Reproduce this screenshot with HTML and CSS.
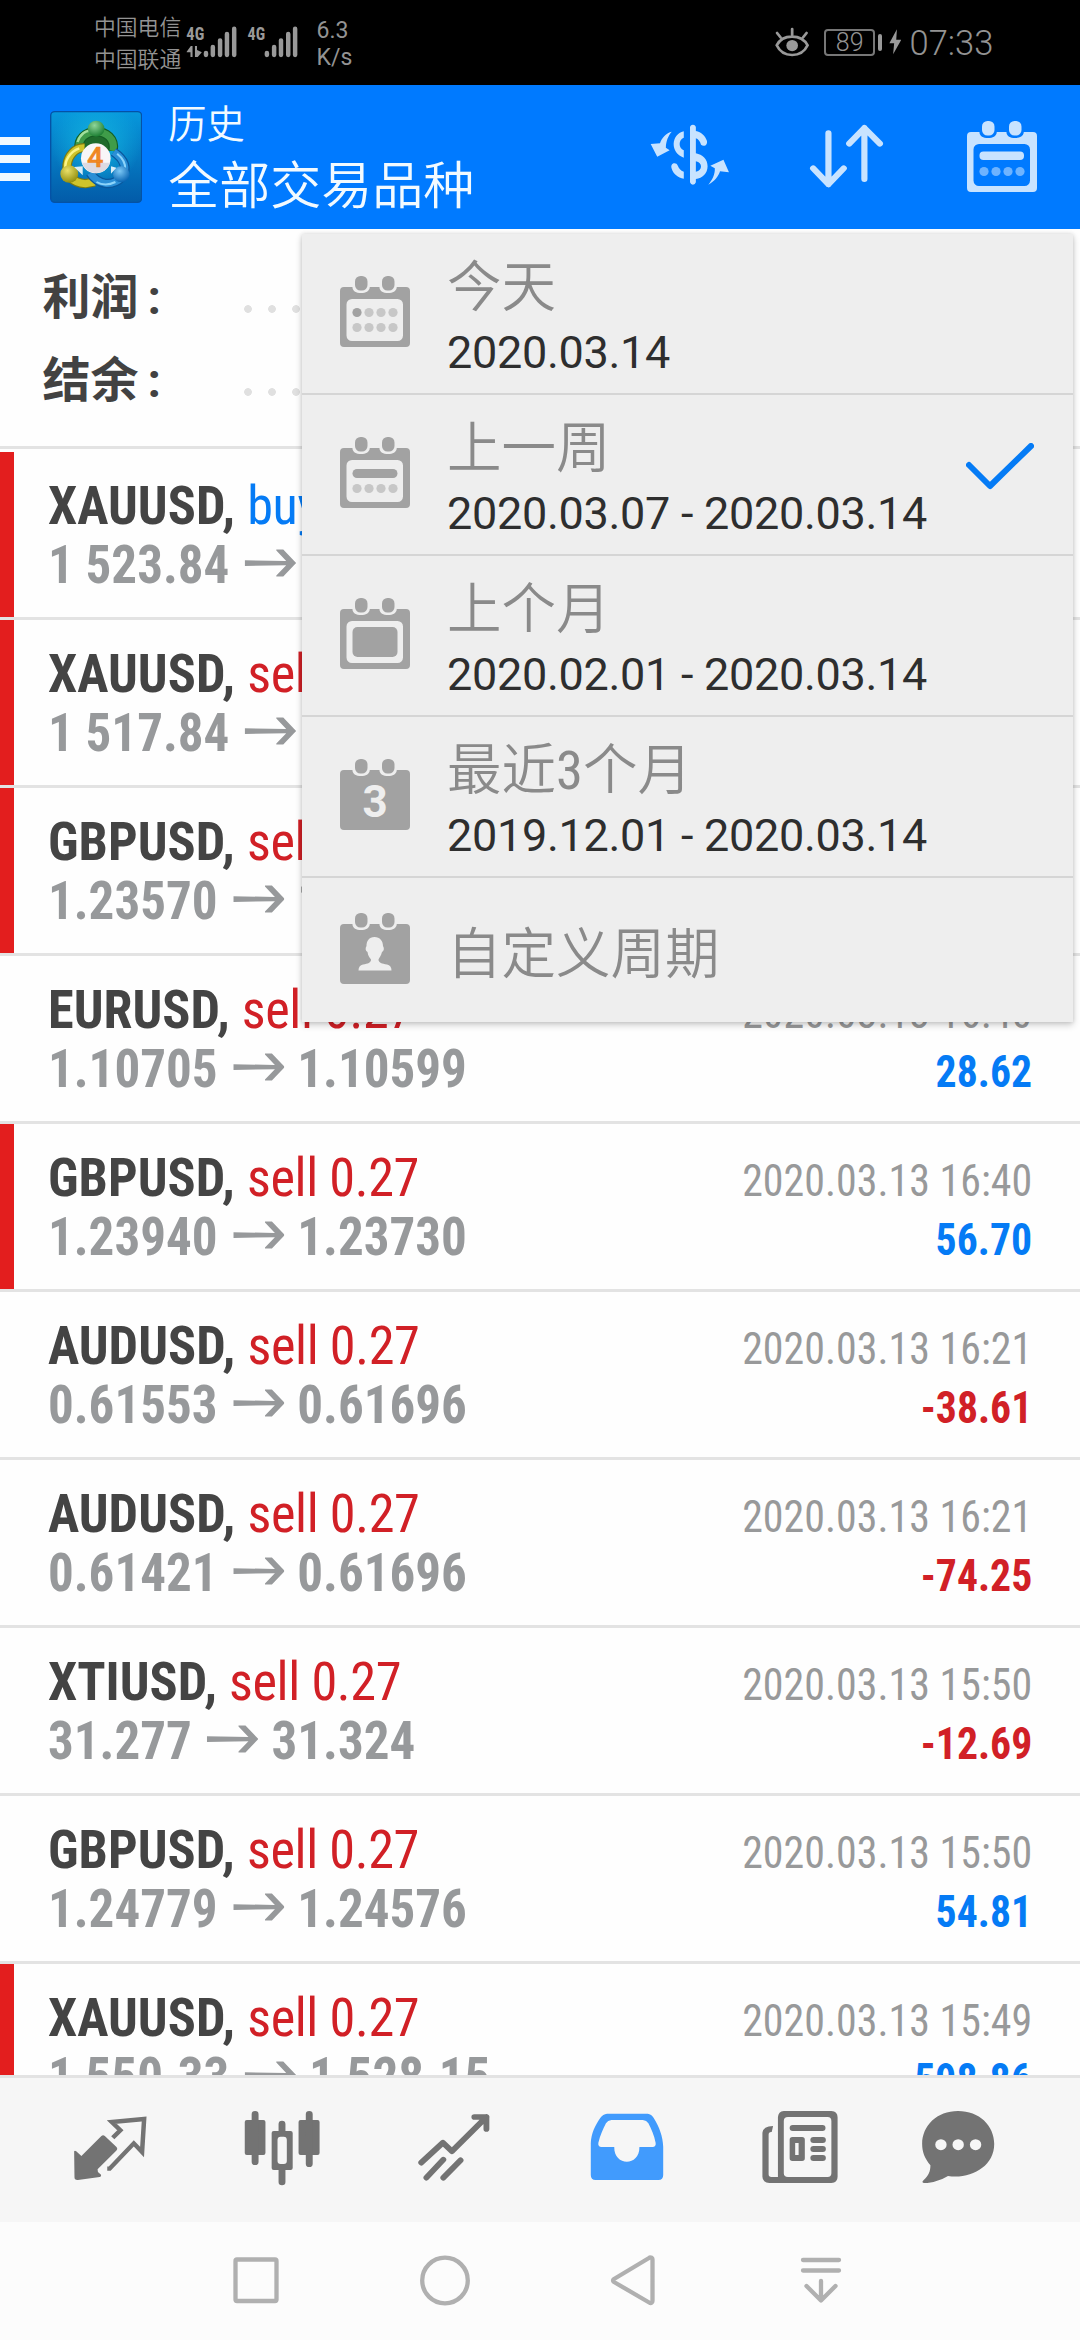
FILE: index.html
```html
<!DOCTYPE html>
<html lang="zh-CN">
<head>
<meta charset="utf-8">
<title>历史</title>
<link rel="stylesheet" href="styles.css">
</head>
<body>
<svg class="defs" aria-hidden="true">
  <defs>
    <symbol id="arrow" viewBox="0 0 52 28" preserveAspectRatio="none">
      <path d="M0 11.2L42 12 32 1.500V0.500H39L52 14 39 27.500H32V26.500L42 16.200 0 17Z"/>
    </symbol>
    <symbol id="cal-pins" viewBox="0 0 70 71">
      <rect x="15" y="0" width="12.500" height="14.500" rx="5.500"/><rect x="42" y="0" width="12.500" height="14.500" rx="5.500"/>
    </symbol>
    <path id="cal-top" d="M4 11H12.500V12C13 15 16 17 21 17S29 15 29.700 12V11H39.500V12C40 15 43 17 48 17S56 15 56.700 12V11H66A4 4 0 0 1 70 15V67A4 4 0 0 1 66 71H4A4 4 0 0 1 0 67V15A4 4 0 0 1 4 11Z"/>
    <path id="cal-frame" fill-rule="evenodd" d="M4 11H12.500V12C13 15 16 17 21 17S29 15 29.700 12V11H39.500V12C40 15 43 17 48 17S56 15 56.700 12V11H66A4 4 0 0 1 70 15V67A4 4 0 0 1 66 71H4A4 4 0 0 1 0 67V15A4 4 0 0 1 4 11ZM12 23A5.500 5.500 0 0 0 6.500 28.500V59.500A5.500 5.500 0 0 0 12 65H57.500A5.500 5.500 0 0 0 63 59.500V28.500A5.500 5.500 0 0 0 57.500 23Z"/>
    <linearGradient id="logo-bg" x1="0" y1="0" x2="0" y2="1"><stop offset="0" stop-color="#0798dc"/><stop offset="1" stop-color="#035ba8"/></linearGradient>
    <radialGradient id="logo-glow" cx=".5" cy=".35" r=".5"><stop offset="0" stop-color="#12b4e0"/><stop offset="1" stop-color="#12b4e0" stop-opacity="0"/></radialGradient>
    <radialGradient id="g-green" cx=".4" cy=".3" r=".7"><stop offset="0" stop-color="#8fd69a"/><stop offset="1" stop-color="#1d7f33"/></radialGradient>
    <radialGradient id="g-yellow" cx=".4" cy=".3" r=".7"><stop offset="0" stop-color="#e9e069"/><stop offset="1" stop-color="#94900f"/></radialGradient>
    <radialGradient id="g-blue" cx=".4" cy=".3" r=".7"><stop offset="0" stop-color="#7cc8f5"/><stop offset="1" stop-color="#0a66b4"/></radialGradient>
  </defs>
</svg>

<header class="status">
  <div class="carriers"><span>中国电信</span><span>中国联通</span></div>
  <svg class="signals" viewBox="540 75 330 100" preserveAspectRatio="none">
    <g class="net"><text x="541" y="121" textLength="52" lengthAdjust="spacingAndGlyphs">4G</text><text x="719" y="121" textLength="51" lengthAdjust="spacingAndGlyphs">4G</text></g>
    <path d="M542 155L554 138H559V171H553V157H542ZM566 138H572V150L586 157 574 171H566Z"/>
    <g class="bars"><path d="M598 159V165M618 141V165M639 121V165M659 102V165M680 86V165"/><path d="M775 159V165M796 141V165M816 121V165M837 102V165M857 86V165"/></g>
  </svg>
  <div class="speed"><span>6.3</span><span>K/s</span></div>
  <svg class="eye" viewBox="683 80 102 92" preserveAspectRatio="none">
    <path class="line" d="M688 135C705 100 760 100 778 135C760 174 706 174 688 135ZM733 86V104M689 98L699 111M775 98L765 111"/><circle cx="733" cy="136" r="17"/>
  </svg>
  <div class="battery"><span class="cell">89</span><i class="nub"></i></div>
  <svg class="bolt" viewBox="1012 88 36 78" preserveAspectRatio="none"><path d="M1035 89L1013 131H1027L1024 164 1048 120H1033Z"/></svg>
  <time class="clock">07:33</time>
</header>

<div class="appbar">
  <div class="burger"><i></i><i></i><i></i></div>
  <svg class="logo" viewBox="145 332 268 276" preserveAspectRatio="none">
    <rect x="147" y="334" width="264" height="272" rx="12" fill="url(#logo-bg)" stroke="#0552a5" stroke-width="4"/>
    <rect x="150" y="337" width="258" height="266" rx="10" fill="url(#logo-glow)"/>
    <path d="M232 452C222 372 332 372 326 452Z" fill="#1f6b2c"/>
    <path d="M230 452C216 375 342 375 328 452" fill="none" stroke="#145f24" stroke-width="28"/>
    <path d="M230 452C216 375 342 375 328 452" fill="none" stroke="#3f9c49" stroke-width="21"/>
    <path d="M225 425C236 392 258 388 275 392" fill="none" stroke="#a2e09c" stroke-width="7"/>
    <path d="M245 442C190 440 165 545 248 550L275 545" fill="none" stroke="#7b7a12" stroke-width="28"/>
    <path d="M245 442C190 440 165 545 248 550L275 545" fill="none" stroke="#cfc42b" stroke-width="21"/>
    <path d="M230 444C200 455 187 485 190 505" fill="none" stroke="#fbf487" stroke-width="7"/>
    <path d="M330 455C365 480 368 505 355 530C325 560 285 555 262 518" fill="none" stroke="#0a579c" stroke-width="28"/>
    <path d="M330 455C365 480 368 505 355 530C325 560 285 555 262 518" fill="none" stroke="#2b8fd6" stroke-width="21"/>
    <path d="M340 460C358 475 364 490 363 505M280 545Q305 560 335 545" fill="none" stroke="#8cd4fa" stroke-width="6"/>
    <circle cx="279" cy="385" r="24" fill="url(#g-green)"/><circle cx="201" cy="521" r="26" fill="url(#g-yellow)"/><circle cx="352" cy="522" r="24" fill="url(#g-blue)"/>
    <path d="M215 500L240 498V525ZM322 498L338 502 322 520Z" fill="#fff" opacity=".85"/>
    <ellipse cx="278" cy="474" rx="43" ry="45" fill="#f8f6f8"/>
    <path d="M238 487H320A43 45 0 0 1 238 487Z" fill="#dddae2"/>
    <text class="four" x="276" y="500" text-anchor="middle">4</text>
  </svg>
  <div class="titles"><span class="screen">历史</span><span class="scope">全部交易品种</span></div>
  <svg class="tool t-dollar" viewBox="320 370 232 190" preserveAspectRatio="none">
    <path d="M383 396C368 398 353 416 349 431L322 433 341 471 377 452 366 444C366 425 373 408 383 396ZM489 555C505 548 520 528 523 515L549 518 533 480 495 498 508 506C509 525 500 542 489 555Z"/>
    <path d="M418 395C380 404 378 460 418 474V452C402 446 402 420 418 414ZM391 491C383 491 380 499 383 507C388 523 401 534 418 537V516C408 513 404 506 401 499C399 493 395 491 391 491ZM436 383Q437 375 444.500 375T453 383V394C469 397 480 409 485 423C488 438 475 442 468 435C465 425 460 418 453 416V461C472 465 487 478 487 500C487 522 472 536 453 538V548Q451 555 444.500 555T436 548ZM453 485V516C473 514 473 488 453 485Z" fill-rule="evenodd"/>
  </svg>
  <svg class="tool t-sort" viewBox="780 370 218 198" preserveAspectRatio="none">
    <path class="thick" d="M836.500 401V554M792 506L836.500 554 881 506M941 538V385M897 432L941 385 986 432"/>
  </svg>
  <svg class="tool t-cal" viewBox="0 0 70 71"><use href="#cal-pins" width="70" height="71"/><use href="#cal-frame"/><rect x="12.500" y="30.500" width="44.500" height="8.500" rx="4"/><g opacity=".55"><circle cx="17" cy="50.500" r="4.600"/><circle cx="29" cy="50.500" r="4.600"/><circle cx="41" cy="50.500" r="4.600"/><circle cx="53" cy="50.500" r="4.600"/></g></svg>
</div>

<main class="history">
  <section class="summary">
    <div class="sum-row"><b>利润<span class="colon">:</span></b><i class="leader"></i></div>
    <div class="sum-row"><b>结余<span class="colon">:</span></b><i class="leader"></i></div>
  </section>

  <section class="deals">
    <article class="deal flagged"><div class="line"><span class="sym">XAUUSD, <em class="buy">buy</em></span></div><div class="line"><span class="px">1 523.84<svg><use href="#arrow"/></svg></span></div></article>
    <article class="deal flagged"><div class="line"><span class="sym">XAUUSD, <em>sell</em></span></div><div class="line"><span class="px">1 517.84<svg><use href="#arrow"/></svg></span></div></article>
    <article class="deal flagged"><div class="line"><span class="sym">GBPUSD, <em>sell</em></span></div><div class="line"><span class="px">1.23570<svg><use href="#arrow"/></svg>1.</span></div></article>
    <article class="deal"><div class="line"><span class="sym">EURUSD, <em>sell 0.27</em></span><time>2020.03.13 16:40</time></div><div class="line"><span class="px">1.10705<svg><use href="#arrow"/></svg>1.10599</span><span class="pl">28.62</span></div></article>
    <article class="deal flagged"><div class="line"><span class="sym">GBPUSD, <em>sell 0.27</em></span><time>2020.03.13 16:40</time></div><div class="line"><span class="px">1.23940<svg><use href="#arrow"/></svg>1.23730</span><span class="pl">56.70</span></div></article>
    <article class="deal"><div class="line"><span class="sym">AUDUSD, <em>sell 0.27</em></span><time>2020.03.13 16:21</time></div><div class="line"><span class="px">0.61553<svg><use href="#arrow"/></svg>0.61696</span><span class="pl loss">-38.61</span></div></article>
    <article class="deal"><div class="line"><span class="sym">AUDUSD, <em>sell 0.27</em></span><time>2020.03.13 16:21</time></div><div class="line"><span class="px">0.61421<svg><use href="#arrow"/></svg>0.61696</span><span class="pl loss">-74.25</span></div></article>
    <article class="deal"><div class="line"><span class="sym">XTIUSD, <em>sell 0.27</em></span><time>2020.03.13 15:50</time></div><div class="line"><span class="px">31.277<svg><use href="#arrow"/></svg>31.324</span><span class="pl loss">-12.69</span></div></article>
    <article class="deal"><div class="line"><span class="sym">GBPUSD, <em>sell 0.27</em></span><time>2020.03.13 15:50</time></div><div class="line"><span class="px">1.24779<svg><use href="#arrow"/></svg>1.24576</span><span class="pl">54.81</span></div></article>
    <article class="deal flagged"><div class="line"><span class="sym">XAUUSD, <em>sell 0.27</em></span><time>2020.03.13 15:49</time></div><div class="line"><span class="px">1 550.33<svg><use href="#arrow"/></svg>1 528.15</span><span class="pl">598.86</span></div></article>
  </section>
</main>

<div class="menu">
  <div class="item">
    <svg class="cal" viewBox="0 0 70 71"><use href="#cal-pins" width="70" height="71"/><use href="#cal-frame"/><circle cx="17" cy="36.500" r="4.600"/><g opacity=".5"><circle cx="29" cy="36.500" r="4.600"/><circle cx="41" cy="36.500" r="4.600"/><circle cx="53" cy="36.500" r="4.600"/><circle cx="17" cy="51.500" r="4.600"/><circle cx="29" cy="51.500" r="4.600"/><circle cx="41" cy="51.500" r="4.600"/><circle cx="53" cy="51.500" r="4.600"/></g></svg>
    <div class="label"><span class="name">今天</span><span class="range">2020.03.14</span></div>
  </div>
  <div class="item">
    <svg class="cal" viewBox="0 0 70 71"><use href="#cal-pins" width="70" height="71"/><use href="#cal-frame"/><rect x="12.500" y="32" width="45" height="9" rx="4.500"/><g opacity=".5"><circle cx="17" cy="51.500" r="4.600"/><circle cx="29" cy="51.500" r="4.600"/><circle cx="41" cy="51.500" r="4.600"/><circle cx="53" cy="51.500" r="4.600"/></g></svg>
    <div class="label"><span class="name">上一周</span><span class="range">2020.03.07 - 2020.03.14</span></div>
    <svg class="check" viewBox="0 0 68 48"><path d="M3 22L24 43 65 3"/></svg>
  </div>
  <div class="item">
    <svg class="cal" viewBox="0 0 70 71"><use href="#cal-pins" width="70" height="71"/><use href="#cal-frame"/><rect x="12.500" y="29" width="45" height="30" rx="5"/></svg>
    <div class="label"><span class="name">上个月</span><span class="range">2020.02.01 - 2020.03.14</span></div>
  </div>
  <div class="item">
    <svg class="cal" viewBox="0 0 70 71"><use href="#cal-pins" width="70" height="71"/><use href="#cal-top"/><text class="cal-num" x="35" y="57.500" text-anchor="middle">3</text></svg>
    <div class="label"><span class="name">最近<span class="num">3</span>个月</span><span class="range">2019.12.01 - 2020.03.14</span></div>
  </div>
  <div class="item short">
    <svg class="cal" viewBox="0 0 70 71"><use href="#cal-pins" width="70" height="71"/><use href="#cal-top"/><path class="cut" d="M34.500 24C40 24 43 28 43 33C44.500 35 44 38 42 39C41 43 39 45 38.500 46.500C38.500 50 42 50.500 47 51.500C50 52.500 51.500 54 51.500 57.500H18.500C18.500 54 20 52.500 23 51.500C28 50.500 31 50 31 46.500C30 45 28 43 27.500 39C25.500 38 25 35 26.500 33C26.500 28 29 24 34.500 24Z"/></svg>
    <div class="label"><span class="name">自定义周期</span></div>
  </div>
</div>

<nav class="tabs">
  <svg viewBox="203 474 232 240" preserveAspectRatio="none"><path d="M215 604Q217 600 221 604L236 618 294 558Q299 553 304 558L337 590Q343 596 337 602L283 658 284 666 293 674Q295 679 289 681L226 690Q216 691 216 682Z"/><path class="st" d="M311 656H318L388 580 412 606 418 507 324 516 349 541 327 563"/></svg>
  <svg viewBox="701 474 232 240" preserveAspectRatio="none"><rect x="709" y="510" width="60" height="105" rx="6"/><rect x="865" y="510" width="61" height="105" rx="6"/><path class="wick" d="M739 493V635M896 493V641M817 522V548M817 655V696"/><path fill-rule="evenodd" d="M793 543H842Q848 543 848 549V654Q848 660 842 660H793Q787 660 787 654V549Q787 543 793 543ZM813 560Q804 560 804 570V633Q804 642 813 642H822Q831 642 831 633V570Q831 560 822 560Z"/></svg>
  <svg viewBox="1201 474 232 240" preserveAspectRatio="none"><path class="st trend" d="M1222 638L1285 578 1311 604 1411 501M1376 501H1411V537M1286 629L1237 683M1336 631L1286 683"/></svg>
  <svg class="active" viewBox="135 474 232 240" preserveAspectRatio="none"><path fill-rule="evenodd" d="M193 491H311Q322 492 328 503C345 530 355 560 356 590V675Q356 690 342 690H160Q146 690 146 675V580C147 550 159 525 174 503Q181 492 193 491ZM206 510Q195 511 190 520C182 536 173 556 168 578Q166 590 177 591H214C213 650 288 650 287 591H325Q336 590 334 578C330 556 321 536 313 520Q308 511 297 510Z"/></svg>
  <svg viewBox="639 474 232 240" preserveAspectRatio="none"><path fill-rule="evenodd" d="M708 483H846Q864 484 864 502V680Q864 698 846 699H666Q647 698 646 680V548Q648 529 677 528L673 546Q664 545 664 554V673Q664 681 672 681H691V502Q692 484 708 483ZM720 501Q708 501 708 513V670Q708 681 720 681H835Q846 681 846 670V513Q846 501 835 501Z"/><rect x="725" y="525" width="104" height="18" rx="9"/><path fill-rule="evenodd" d="M733 561H761Q769 561 769 569V625Q769 633 761 633H733Q725 633 725 625V569Q725 561 733 561ZM741 579V615H751V579Z"/><rect x="785" y="561" width="45" height="18" rx="9"/><rect x="785" y="588" width="45" height="18" rx="9"/><rect x="785" y="615" width="45" height="18" rx="9"/></svg>
  <svg viewBox="1097 474 232 240" preserveAspectRatio="none"><path fill-rule="evenodd" d="M1213 483C1275 483 1318 527 1318 582C1318 650 1250 688 1184 678C1162 691 1140 699 1115 699Q1106 698 1113 691C1128 677 1133 665 1133 646C1116 625 1109 605 1109 582C1109 527 1152 483 1213 483Z"/><g class="dots"><circle cx="1163.500" cy="584" r="16.500"/><circle cx="1213.500" cy="584" r="16.500"/><circle cx="1264" cy="584" r="16.500"/></g></svg>
</nav>

<footer class="sysnav">
  <svg viewBox="0 0 60 60"><rect x="9.500" y="9.500" width="41" height="41.500" rx="1.500"/></svg>
  <svg viewBox="0 0 60 60"><circle cx="30" cy="30.500" r="22.800"/></svg>
  <svg viewBox="0 0 60 60"><path d="M47.500 7.500A2 2 0 0 1 49.500 9.500V51A2 2 0 0 1 47 53L11 32Q9 30.500 11 29L46 8A2 2 0 0 1 47.500 7.500Z"/></svg>
  <svg viewBox="0 0 60 60"><path d="M12 10H48M12 20.500H48M30 31V50M15.500 36L30 50.500 44.500 36"/></svg>
</footer>
</body>
</html>
```

FILE: styles.css
```css
* { box-sizing: border-box; }
html, body { margin: 0; }
body {
  position: relative;
  width: 1080px;
  height: 2340px;
  display: flex;
  flex-direction: column;
  overflow: hidden;
  background: #fefefe;
  font-family: Roboto, "Noto Sans CJK SC", sans-serif;
}
svg { display: block; }
.defs { position: absolute; width: 0; height: 0; }
i, em { font-style: normal; }

/* status bar */
.status {
  flex: none;
  height: 85px;
  display: flex;
  align-items: flex-start;
  background: #000;
  color: #939393;
  fill: #999;
}
.carriers {
  width: 92px;
  margin: 10px 0 0 94px;
  display: flex;
  flex-direction: column;
  font-family: "Noto Sans CJK SC", sans-serif;
  font-weight: 350;
  font-size: 21.800px;
  line-height: 32px;
  white-space: nowrap;
}
.signals { width: 113.600px; height: 33.300px; margin-top: 25px; }
.net text { font: 700 55px "Roboto Condensed", Roboto, sans-serif; font-stretch: 75%; }
.bars { stroke: #999; stroke-width: 13; stroke-linecap: round; }
.speed {
  width: 40px;
  margin: 17px 0 0 17px;
  display: flex;
  flex-direction: column;
  font-size: 23px;
  line-height: 27px;
}
.eye { width: 35px; height: 30.600px; margin: 26.700px 0 0 418.600px; }
.eye .line { fill: none; stroke: #999; stroke-width: 8; stroke-linecap: round; }
.battery { display: flex; align-items: center; margin: 29px 0 0 14px; gap: 2.500px; }
.cell {
  width: 51px;
  height: 27px;
  border: 2px solid #777;
  border-radius: 4px;
  font-weight: 300;
  font-size: 25px;
  line-height: 24px;
  text-align: center;
}
.nub { width: 4px; height: 17px; border-radius: 2px; background: #999; }
.bolt { width: 12.400px; height: 26px; margin: 29px 0 0 7px; }
.clock { margin: 23px 0 0 8.500px; font-weight: 300; font-size: 34.500px; line-height: 40px; }

/* application bar */
.appbar {
  flex: none;
  height: 144px;
  display: flex;
  align-items: flex-start;
  background: #007aff;
  color: #f2faff;
}
.burger { width: 30px; margin-top: 52px; display: flex; flex-direction: column; gap: 10px; }
.burger i { height: 8px; background: #f0f8ff; }
.logo { width: 92.300px; height: 92px; margin: 25.700px 0 0 20px; }
.four { font: 500 84px Roboto, sans-serif; fill: #f08a24; stroke: #ee7d1a; stroke-width: 1.500; }
.titles {
  width: 330px;
  margin: 9px 0 0 26px;
  display: flex;
  flex-direction: column;
  font-family: "Noto Sans CJK SC", sans-serif;
  font-weight: 350;
  white-space: nowrap;
}
.screen { font-size: 38.300px; line-height: 56px; }
.scope { font-size: 51px; line-height: 65px; }
.tool { fill: #c8e3ff; flex: none; }
.t-dollar { width: 80px; height: 63.300px; margin: 38.300px 0 0 152px; }
.t-sort { width: 75px; height: 66px; margin: 38.300px 0 0 78.500px; }
.thick { fill: none; stroke: #c8e3ff; stroke-width: 18; stroke-linecap: round; stroke-linejoin: round; }
.t-cal { width: 70px; height: 71px; margin: 36px 0 0 83.700px; }

/* account summary */
.history { flex: none; height: 1846px; overflow: hidden; }
.summary { height: 220px; padding: 25px 0 0 42.500px; border-bottom: 3px solid #e3e3e3; }
.sum-row { height: 83px; display: flex; align-items: center; color: #424242; }
.sum-row b { width: 201.500px; font: 700 48px/83px "Noto Sans CJK SC", sans-serif; white-space: nowrap; }
.colon { font-family: Roboto, sans-serif; margin-left: 9px; }
.leader {
  width: 760px;
  height: 8px;
  margin-top: 26px;
  background: radial-gradient(circle at 4px 4px, #e0e0e0 3.500px, transparent 4.200px) 0 0 / 24px 8px repeat-x;
}

/* deals */
.deals { padding-top: 3px; }
.deal {
  height: 168px;
  padding: 24px 48px 0 48px;
  border-bottom: 3px solid #e3e3e3;
  font-family: "Roboto Condensed", Roboto, sans-serif;
  font-stretch: 75%;
}
.flagged { background: linear-gradient(#e31e1e, #e31e1e) 0 0 / 14px 100% no-repeat; }
.line { height: 59px; display: flex; justify-content: space-between; align-items: baseline; line-height: 59px; white-space: pre; }
.sym { font-size: 54px; font-weight: 700; color: #444; transform: scaleX(.968); transform-origin: left; }
.sym em { font-weight: 400; color: #d12026; letter-spacing: -.4px; }
.sym .buy { color: #057bf5; }
.px { font-size: 54px; font-weight: 700; color: #97999b; transform: scaleX(.945); transform-origin: left; }
.px svg { display: inline-block; width: 54.600px; height: 28px; margin: 0 13.500px 0 16.300px; vertical-align: 6px; fill: #97999b; }
.deal time { font-size: 45px; color: #98999a; transform: scaleX(.932); transform-origin: right; }
.pl { font-size: 45px; font-weight: 700; color: #057bf5; transform: scaleX(.927); transform-origin: right; }
.loss { color: #d12026; }

/* period menu, floats over the list */
.menu {
  position: absolute;
  left: 302px;
  top: 234px;
  width: 771px;
  height: 788px;
  background: #eee;
  box-shadow: 0 3px 7px rgba(0, 0, 0, .2), 0 0 4px rgba(0, 0, 0, .12);
}
.item {
  height: 161px;
  padding-left: 38px;
  display: flex;
  align-items: flex-start;
  border-bottom: 2px solid #d5d5d5;
}
.cal { flex: none; width: 70px; height: 71px; margin-top: 42px; fill: #a2a2a2; }
.cal-num { font: 700 44px Roboto, sans-serif; fill: #eee; }
.cut { fill: #eee; }
.label { width: 520px; margin: 9px 0 0 37px; display: flex; flex-direction: column; white-space: nowrap; }
.name { height: 83px; font: 350 54.500px/80px "Noto Sans CJK SC", sans-serif; color: #8a8a8a; }
.num { font-family: "Roboto Condensed", Roboto, sans-serif; font-stretch: 75%; font-weight: 400; line-height: 1; }
.range { font-size: 45px; line-height: 54px; letter-spacing: -.3px; color: #2e2e2e; }
.check { width: 68px; height: 48px; margin: 48px 0 0 -1px; fill: none; stroke: #057bf5; stroke-width: 6; stroke-linecap: round; stroke-linejoin: round; }
.short { height: 144px; border-bottom: 0; }
.short .cal { margin-top: 35px; }
.short .label { margin-top: 32px; }

/* bottom tabs */
.tabs {
  flex: none;
  height: 147px;
  padding: 30px 0 0 24px;
  display: grid;
  grid-template-columns: 172px 171px 173px 173px 174px 141.400px;
  justify-items: center;
  align-items: start;
  background: #f6f6f6;
  border-top: 3px solid #e3e3e3;
  fill: #737373;
}
.tabs svg { width: 80px; height: 80px; }
.tabs .active { fill: #419bfd; }
.st { fill: none; stroke: #737373; stroke-width: 13; }
.trend { stroke-width: 17; stroke-linecap: round; stroke-linejoin: round; }
.wick { fill: none; stroke: #737373; stroke-width: 20; stroke-linecap: round; }
.dots { fill: #f6f6f6; }

/* system navigation */
.sysnav {
  flex: 1;
  padding: 28px 0 0 162px;
  display: grid;
  grid-template-columns: repeat(4, 188.400px);
  justify-items: center;
  align-items: start;
  background: #fcfcfc;
  fill: none;
  stroke: #b0b0b0;
  stroke-width: 4.300;
  stroke-linecap: round;
  stroke-linejoin: round;
}
.sysnav svg { width: 60px; height: 60px; }
```
